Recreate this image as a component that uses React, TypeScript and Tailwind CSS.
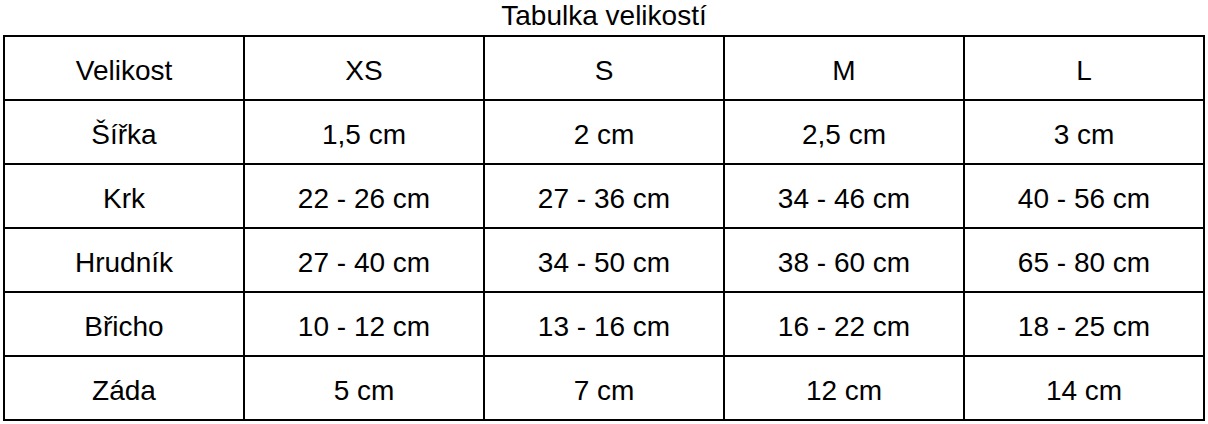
const header = ['Velikost', 'XS', 'S', 'M', 'L']

const rows: string[][] = [
  ['Šířka', '1,5 cm', '2 cm', '2,5 cm', '3 cm'],
  ['Krk', '22 - 26 cm', '27 - 36 cm', '34 - 46 cm', '40 - 56 cm'],
  ['Hrudník', '27 - 40 cm', '34 - 50 cm', '38 - 60 cm', '65 - 80 cm'],
  ['Břicho', '10 - 12 cm', '13 - 16 cm', '16 - 22 cm', '18 - 25 cm'],
  ['Záda', '5 cm', '7 cm', '12 cm', '14 cm'],
]

export default function App() {
  return (
    <div className="min-h-[424px] w-[1208px] bg-white px-[3px] text-[28px] text-black" style={{ fontFamily: '"Liberation Sans", Arial, sans-serif' }}>
      <h1 className="text-center text-[28px] font-normal leading-[32px]">Tabulka velikostí</h1>
      <table className="mt-[3px] w-full table-fixed border-collapse border-2 border-black">
        <tbody>
          {[header, ...rows].map((row, i) => (
            <tr key={i} className="h-[64px]">
              {row.map((cell, j) => (
                <td key={j} className="border-2 border-black pt-[6px] text-center align-middle leading-[32px]">
                  {cell}
                </td>
              ))}
            </tr>
          ))}
        </tbody>
      </table>
    </div>
  )
}
